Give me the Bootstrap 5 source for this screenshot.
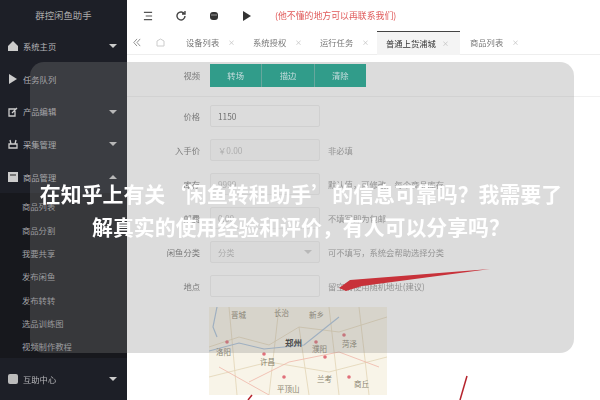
<!DOCTYPE html>
<html lang="zh">
<head>
<meta charset="utf-8">
<link href="https://cdn.jsdelivr.net/npm/bootstrap@5.3.0/dist/css/bootstrap.min.css" rel="stylesheet">
<style>
html,body{height:100%;overflow:hidden}
body{font-family:"Noto Sans CJK SC","Liberation Sans",sans-serif;background:#fff;font-size:8.3px;color:#777}
.stage{width:600px;height:400px;position:relative;overflow:hidden}
.base{width:600px;height:400px;filter:blur(.65px)}
.side{width:127px;background:#1d1f27;color:#b5b5b8;flex:none}
.brand{height:30px;font-size:9.4px;color:#aaa}
.mrow{height:33px;padding:0 10px 0 8px;font-size:8.3px;gap:5px}
.mrow svg{flex:none}
.sgroup{background:#17181d;padding-top:1.5px}
.sub{height:23.3px;padding-left:22px;font-size:8.3px;color:#a4a4a8}
.caret{margin-left:auto;width:0;height:0;border:4px solid transparent;border-top:4px solid #ccc;border-bottom:0}
.caret.up{border-top:0;border-bottom:4px solid #ccc}
.foot{height:42px}
.topbar{height:31px;gap:23px;padding-left:16px}
.notice{color:#e05a5a;font-size:8.9px;padding-top:1px}
.tabs{height:24px;border-bottom:1px solid #eee;padding-left:6px;color:#777}
.homeic{margin:0 14px 0 15px}
.tab{height:24px;padding:0 11px 0 7px;width:67px;justify-content:space-between}
.tab.cur{width:83px;background:#f4f4f4;border-top:1px solid #444;color:#333;padding-left:9px;margin:0 3px 0 -3px}
.tabclose{color:#bbb;font-size:7px}
.form-area{padding-top:9px}
.frow{height:34px}
.frow.first{height:33px;border-bottom:1px solid #f1f1f1;margin-bottom:2px}
.flab{width:73px;text-align:right;margin-right:10px;flex:none;color:#777}
.flab.mid{line-height:23px}
.inp{width:110px;height:22px;border:1px solid #eee;border-radius:2px;padding:0 7px;flex:none;color:#666}
.inp.off{background:#fbfbfb;color:#bbb}
.hint{margin-left:8px;color:#999}
.seg{height:23px;background:#0fa58c;color:#dff;width:156px}
.seg span{flex:1;text-align:center;border-right:1px solid #5bb5a6;line-height:23px}
.seg span:last-child{border:0}
.maprow{padding:4px 0 0 82px}
.maptxt{font-size:7.5px;fill:#8a8470}
.maptxt.big{font-size:8.500px;fill:#333;font-weight:700}
.overlay{position:absolute;left:30px;top:62px;width:544px;height:291px;border-radius:14px;background:rgba(134,134,134,.29)}
.headline{position:absolute;left:30px;top:177px;width:542px;text-align:center;color:#fff;font-size:20.9px;line-height:33px;font-weight:700;filter:blur(.3px)}
.arrow{position:absolute;left:0;top:0;filter:blur(.4px)}
</style>
</head>
<body>
<div class="stage">
<div class="base d-flex">
  <aside class="side d-flex flex-column">
    <div class="brand d-flex align-items-center justify-content-center">群控闲鱼助手</div>
    <div class="mrow d-flex align-items-center"><svg width="10" height="10" viewBox="0 0 10 10"><path d="M5 0 10 5V10H0V5Z" fill="#ccc"/></svg>系统主页<i class="caret"></i></div>
    <div class="mrow d-flex align-items-center"><svg width="10" height="10" viewBox="0 0 10 10"><path d="M1 0 9 5 1 10Z" fill="#ccc"/></svg>任务队列</div>
    <div class="mrow d-flex align-items-center"><svg width="10" height="10" viewBox="0 0 10 10"><path d="M1 2H7V9H1Z M4 6 9 1" fill="none" stroke="#ccc" stroke-width="1.3"/></svg>产品编辑<i class="caret"></i></div>
    <div class="mrow d-flex align-items-center"><svg width="10" height="10" viewBox="0 0 10 10"><path d="M1 5H9V9H1Z M3 5 2 1M7 5 8 1" fill="none" stroke="#ccc" stroke-width="1.3"/></svg>采集管理<i class="caret"></i></div>
    <div class="mrow d-flex align-items-center"><svg width="10" height="10" viewBox="0 0 10 10"><path d="M0 0H10V10H0Z" fill="#ccc"/><path d="M2 3H8" stroke="#222"/></svg>商品管理<i class="caret up"></i></div>
    <div class="sgroup d-flex flex-column flex-grow-1">
      <div class="sub d-flex align-items-center">商品列表</div>
      <div class="sub d-flex align-items-center">商品分割</div>
      <div class="sub d-flex align-items-center">我要共享</div>
      <div class="sub d-flex align-items-center">发布闲鱼</div>
      <div class="sub d-flex align-items-center">发布转转</div>
      <div class="sub d-flex align-items-center">选品训练图</div>
      <div class="sub d-flex align-items-center">视频制作教程</div>
      <div class="mrow foot d-flex align-items-center mt-auto side"><svg width="10" height="10" viewBox="0 0 10 10"><rect width="10" height="10" rx="2" fill="#bbb"/></svg>互助中心<i class="caret"></i></div>
    </div>
  </aside>
  <main class="flex-grow-1 d-flex flex-column">
    <div class="topbar d-flex align-items-center">
      <svg width="10" height="10" viewBox="0 0 11 10"><path d="M1 1H10M3 5H10M1 9H10" stroke="#555" stroke-width="1.3"/></svg>
      <svg width="10" height="10" viewBox="0 0 10 10"><path d="M8.5 3A4 4 0 1 0 9 5M9 0V3H6" fill="none" stroke="#444" stroke-width="1.4"/></svg>
      <svg width="10" height="10" viewBox="0 0 10 10"><rect x="1" y="1" width="8" height="8" rx="3" fill="#333"/><path d="M2 4H8" stroke="#999"/></svg>
      <svg width="10" height="10" viewBox="0 0 10 10"><path d="M1 0 9 5 1 10Z" fill="#333"/></svg>
      <span class="notice">(他不懂的地方可以再联系我们)</span>
    </div>
    <div class="tabs d-flex align-items-center">
      <svg width="8" height="9" viewBox="0 0 10 9"><path d="M5 0 1 4.500 5 9M9 0 5 4.500 9 9" fill="none" stroke="#777"/></svg>
      <svg class="homeic" width="9" height="9" viewBox="0 0 9 9"><path d="M1 3 4.500 1 8 3V8H1Z" fill="none" stroke="#ccc"/></svg>
      <div class="tab d-flex align-items-center text-nowrap">设备列表<span class="tabclose">×</span></div>
      <div class="tab d-flex align-items-center text-nowrap">系统授权<span class="tabclose">×</span></div>
      <div class="tab d-flex align-items-center text-nowrap">运行任务<span class="tabclose">×</span></div>
      <div class="tab cur d-flex align-items-center text-nowrap">普通上货浦城<span class="tabclose">×</span></div>
      <div class="tab d-flex align-items-center text-nowrap">商品列表<span class="tabclose">×</span></div>
    </div>
    <div class="form-area">
      <div class="frow first d-flex align-items-start"><div class="flab mid">视频</div><div class="seg d-flex"><span>转场</span><span>描边</span><span>清除</span></div></div>
      <div class="frow d-flex align-items-center"><div class="flab">价格</div><div class="inp d-flex align-items-center">1150</div></div>
      <div class="frow d-flex align-items-center"><div class="flab">入手价</div><div class="inp off d-flex align-items-center">￥0.00</div><div class="hint">非必填</div></div>
      <div class="frow d-flex align-items-center"><div class="flab">库存</div><div class="inp off d-flex align-items-center">9999</div><div class="hint">默认值，可修改，每个商品库存</div></div>
      <div class="frow d-flex align-items-center"><div class="flab">邮费</div><div class="inp off d-flex align-items-center">0.00</div><div class="hint">不填写即为包邮</div></div>
      <div class="frow d-flex align-items-center"><div class="flab">闲鱼分类</div><div class="inp off d-flex align-items-center justify-content-between">分类<i class="caret m-0"></i></div><div class="hint">可不填写，系统会帮助选择分类</div></div>
      <div class="frow d-flex align-items-center"><div class="flab">地点</div><div class="inp"></div><div class="hint">留空则使用随机地址(建议)</div></div>
      <div class="maprow">
        <svg class="d-block" width="178" height="88" viewBox="0 0 178 88"><rect width="178" height="88" fill="#f8f4e8"/><path d="M0 40 30 30 60 38 90 20 130 25 178 10M20 0 28 88M70 0 60 88M120 0 130 88M0 70 60 55 120 65 178 50M90 20 100 88M150 0 160 88" fill="none" stroke="#e2d4b5" stroke-width=".8"/><path d="M0 44 30 36 55 42 95 38 130 10M8 0 4 20 8 30" fill="none" stroke="#a9c0d8" stroke-width="1.200"/><path d="M40 75 80 55 130 45 170 60M10 60 60 88" fill="none" stroke="#efb6a8" stroke-width=".8"/><g fill="#e0707a"><circle cx="18" cy="35" r="1.800"/><circle cx="55" cy="47" r="1.800"/><circle cx="75" cy="70" r="1.800"/><circle cx="107" cy="35" r="1.800"/><circle cx="135" cy="28" r="1.800"/><circle cx="140" cy="70" r="1.800"/><circle cx="116" cy="50" r="1.800"/></g><text class="maptxt" x="22" y="11">晋城</text><text class="maptxt" x="65" y="9">长治</text><text class="maptxt" x="100" y="11">新乡</text><text class="maptxt" x="7" y="48">洛阳</text><text class="maptxt big" x="76" y="39">郑州</text><text class="maptxt" x="51" y="58">许昌</text><text class="maptxt" x="68" y="85">平顶山</text><text class="maptxt" x="103" y="45">濮阳</text><text class="maptxt" x="133" y="40">菏泽</text><text class="maptxt" x="108" y="75">兰考</text><text class="maptxt" x="145" y="80">商丘</text></svg>
      </div>
    </div>
  </main>
</div>
  <div class="overlay"></div>
  <svg class="arrow" width="600" height="400" viewBox="0 0 600 400"><path d="M490 269 350 280 339 288 346 291 362 286Z" fill="#c8323a"/><path d="M467 376 460 400" stroke="#b5232c" stroke-width="1.5" fill="none"/><path d="M252 395 248 400" stroke="#b5232c" stroke-width="1.500" fill="none"/></svg>
  <div class="headline">在知乎上有关‘闲鱼转租助手’的信息可靠吗？我需要了<br>解真实的使用经验和评价，有人可以分享吗？</div>
</div>
<script src="https://cdn.jsdelivr.net/npm/bootstrap@5.3.0/dist/js/bootstrap.bundle.min.js"></script>
</body>
</html>
